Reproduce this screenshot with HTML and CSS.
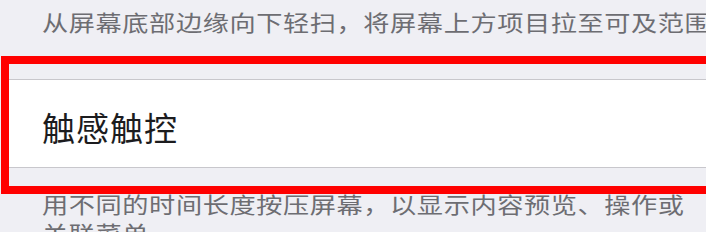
FILE: index.html
```html
<!DOCTYPE html>
<html lang="zh-CN">
<head>
<meta charset="utf-8">
<link rel="stylesheet" href="styles.css">
</head>
<body>
<div class="page">
  <p class="note note-top"><span class="wide">从屏幕底部边缘向下轻扫，将屏幕上方项目拉至可及范围</span></p>
  <div class="highlight">
    <div class="group">
      <div class="cell">触感触控</div>
    </div>
  </div>
  <p class="note note-bottom"><span class="wide">用不同的时间长度按压屏幕，以显示内容预览、操作或<br>关联菜单</span></p>
</div>
</body>
</html>
```
FILE: styles.css
```css
html, body {
  margin: 0;
  padding: 0;
}
body {
  background: #efeff4;
  font-family: "Noto Sans CJK SC", "Noto Sans", sans-serif;
  overflow: hidden;
  width: 706px;
  height: 232px;
}
.page {
  display: flex;
  flex-direction: column;
}
.note {
  margin: 0;
  color: #6d6d72;
  font-size: 22px;
  letter-spacing: 0.5px;
  white-space: nowrap;
  padding-left: 42px;
}
.wide {
  display: inline-block;
  transform: scaleX(1.19);
  transform-origin: left center;
}
.note-top {
  line-height: 40px;
  padding-top: 1px;
  height: 40px;
}
.highlight {
  margin-top: 15px;
  margin-left: 1px;
  margin-right: -30px;
  border: 8px solid #ff0000;
  border-right: none;
  padding: 15px 0 18px;
}
.group {
  background: #fff;
  border-top: 1px solid #c8c7cc;
  border-bottom: 1px solid #c8c7cc;
}
.cell {
  height: 87px;
  box-sizing: border-box;
  padding: 6px 0 0 33px;
  display: flex;
  align-items: center;
  font-size: 33px;
  letter-spacing: 1px;
  color: #1c1c1e;
}
.note-bottom {
  line-height: 29px;
  margin-top: -5px;
}
```
